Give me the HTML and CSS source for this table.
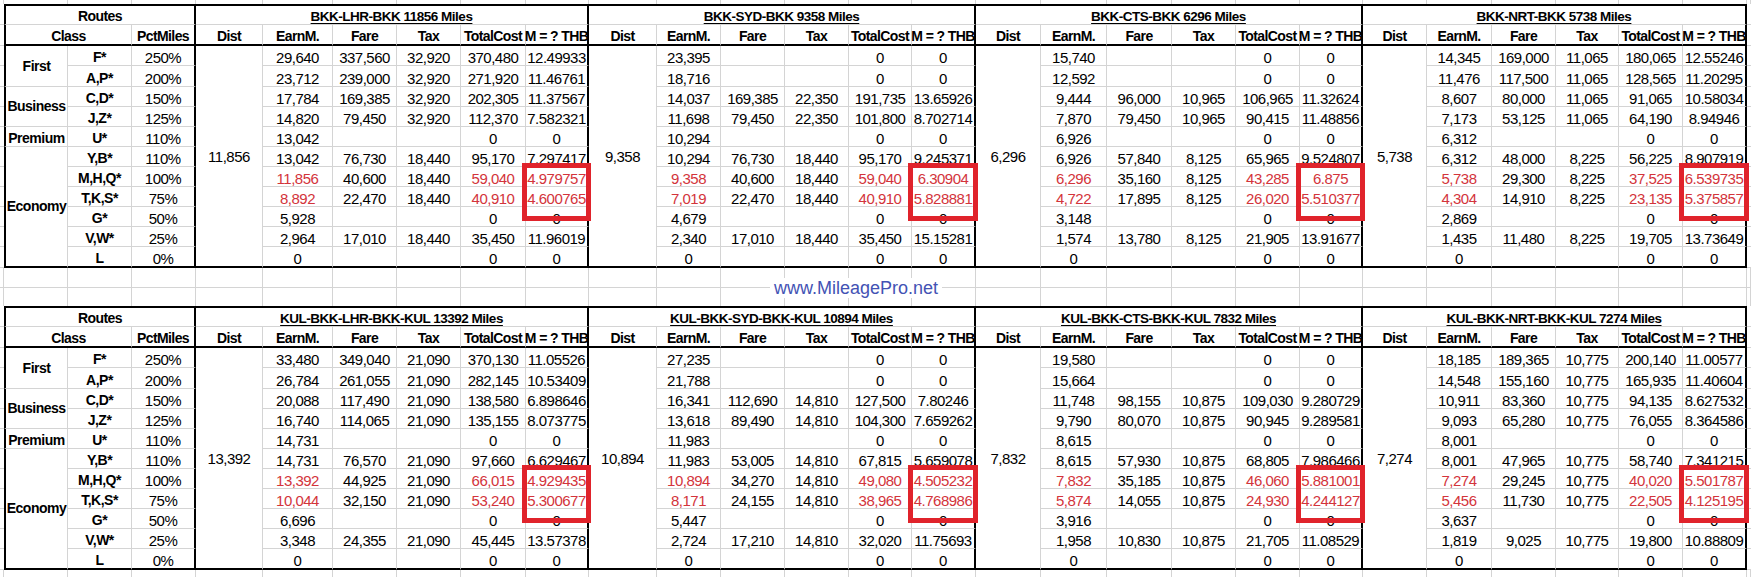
FILE: index.html
```html
<!DOCTYPE html>
<html>
<head>
<meta charset="utf-8">
<title>MileagePro</title>
<link rel="stylesheet" href="styles.css">
</head>
<body>
<div class="sheet">

<div class="cols filler top">
<div></div><div></div><div></div><div></div><div></div><div></div><div></div><div></div><div></div><div></div><div></div><div></div><div></div><div></div><div></div><div></div><div></div><div></div><div></div><div></div><div></div><div></div><div></div><div></div><div></div><div></div><div></div><div></div><div></div>
</div>

<div class="cols tbl">
<div class="tr h1"><div class="g"></div><div class="a r s3">Routes</div><div class="r s6 ttl">BKK-LHR-BKK 11856 Miles</div><div class="r s6 ttl">BKK-SYD-BKK 9358 Miles</div><div class="r s6 ttl">BKK-CTS-BKK 6296 Miles</div><div class="r s6 ttl">BKK-NRT-BKK 5738 Miles</div><div class="ge"></div></div>
<div class="tr h2"><div class="g"></div><div class="a s2">Class</div><div class="r">PctMiles</div><div>Dist</div><div>EarnM.</div><div>Fare</div><div>Tax</div><div>TotalCost</div><div class="r">M = ? THB</div><div>Dist</div><div>EarnM.</div><div>Fare</div><div>Tax</div><div>TotalCost</div><div class="r">M = ? THB</div><div>Dist</div><div>EarnM.</div><div>Fare</div><div>Tax</div><div>TotalCost</div><div class="r">M = ? THB</div><div>Dist</div><div>EarnM.</div><div>Fare</div><div>Tax</div><div>TotalCost</div><div class="r">M = ? THB</div><div class="ge"></div></div>
<div class="tr"><div class="g"></div><div class="a lb v2">First</div><div class="lb">F*</div><div class="r">250%</div><div class="dist">11,856</div><div>29,640</div><div>337,560</div><div>32,920</div><div>370,480</div><div class="r">12.49933</div><div class="dist">9,358</div><div>23,395</div><div></div><div></div><div>0</div><div class="r">0</div><div class="dist">6,296</div><div>15,740</div><div></div><div></div><div>0</div><div class="r">0</div><div class="dist">5,738</div><div>14,345</div><div>169,000</div><div>11,065</div><div>180,065</div><div class="r">12.55246</div><div class="ge"></div></div>
<div class="tr"><div class="g"></div><div class="lb">A,P*</div><div class="r">200%</div><div>23,712</div><div>239,000</div><div>32,920</div><div>271,920</div><div class="r">11.46761</div><div>18,716</div><div></div><div></div><div>0</div><div class="r">0</div><div>12,592</div><div></div><div></div><div>0</div><div class="r">0</div><div>11,476</div><div>117,500</div><div>11,065</div><div>128,565</div><div class="r">11.20295</div><div class="ge"></div></div>
<div class="tr"><div class="g"></div><div class="a lb v2">Business</div><div class="lb">C,D*</div><div class="r">150%</div><div>17,784</div><div>169,385</div><div>32,920</div><div>202,305</div><div class="r">11.37567</div><div>14,037</div><div>169,385</div><div>22,350</div><div>191,735</div><div class="r">13.65926</div><div>9,444</div><div>96,000</div><div>10,965</div><div>106,965</div><div class="r">11.32624</div><div>8,607</div><div>80,000</div><div>11,065</div><div>91,065</div><div class="r">10.58034</div><div class="ge"></div></div>
<div class="tr"><div class="g"></div><div class="lb">J,Z*</div><div class="r">125%</div><div>14,820</div><div>79,450</div><div>32,920</div><div>112,370</div><div class="r">7.582321</div><div>11,698</div><div>79,450</div><div>22,350</div><div>101,800</div><div class="r">8.702714</div><div>7,870</div><div>79,450</div><div>10,965</div><div>90,415</div><div class="r">11.48856</div><div>7,173</div><div>53,125</div><div>11,065</div><div>64,190</div><div class="r">8.94946</div><div class="ge"></div></div>
<div class="tr"><div class="g"></div><div class="a lb">Premium</div><div class="lb">U*</div><div class="r">110%</div><div>13,042</div><div></div><div></div><div>0</div><div class="r">0</div><div>10,294</div><div></div><div></div><div>0</div><div class="r">0</div><div>6,926</div><div></div><div></div><div>0</div><div class="r">0</div><div>6,312</div><div></div><div></div><div>0</div><div class="r">0</div><div class="ge"></div></div>
<div class="tr"><div class="g"></div><div class="a lb eco">Economy</div><div class="lb">Y,B*</div><div class="r">110%</div><div>13,042</div><div>76,730</div><div>18,440</div><div>95,170</div><div class="r">7.297417</div><div>10,294</div><div>76,730</div><div>18,440</div><div>95,170</div><div class="r">9.245371</div><div>6,926</div><div>57,840</div><div>8,125</div><div>65,965</div><div class="r">9.524807</div><div>6,312</div><div>48,000</div><div>8,225</div><div>56,225</div><div class="r">8.907919</div><div class="ge"></div></div>
<div class="tr"><div class="g"></div><div class="lb">M,H,Q*</div><div class="r">100%</div><div class="red">11,856</div><div>40,600</div><div>18,440</div><div class="red">59,040</div><div class="red r hl">4.979757</div><div class="red">9,358</div><div>40,600</div><div>18,440</div><div class="red">59,040</div><div class="red r hl">6.30904</div><div class="red">6,296</div><div>35,160</div><div>8,125</div><div class="red">43,285</div><div class="red r hl">6.875</div><div class="red">5,738</div><div>29,300</div><div>8,225</div><div class="red">37,525</div><div class="red r hl">6.539735</div><div class="ge"></div></div>
<div class="tr"><div class="g"></div><div class="lb">T,K,S*</div><div class="r">75%</div><div class="red">8,892</div><div>22,470</div><div>18,440</div><div class="red">40,910</div><div class="red r">4.600765</div><div class="red">7,019</div><div>22,470</div><div>18,440</div><div class="red">40,910</div><div class="red r">5.828881</div><div class="red">4,722</div><div>17,895</div><div>8,125</div><div class="red">26,020</div><div class="red r">5.510377</div><div class="red">4,304</div><div>14,910</div><div>8,225</div><div class="red">23,135</div><div class="red r">5.375857</div><div class="ge"></div></div>
<div class="tr"><div class="g"></div><div class="lb">G*</div><div class="r">50%</div><div>5,928</div><div></div><div></div><div>0</div><div class="r">0</div><div>4,679</div><div></div><div></div><div>0</div><div class="r">0</div><div>3,148</div><div></div><div></div><div>0</div><div class="r">0</div><div>2,869</div><div></div><div></div><div>0</div><div class="r">0</div><div class="ge"></div></div>
<div class="tr"><div class="g"></div><div class="lb">V,W*</div><div class="r">25%</div><div>2,964</div><div>17,010</div><div>18,440</div><div>35,450</div><div class="r">11.96019</div><div>2,340</div><div>17,010</div><div>18,440</div><div>35,450</div><div class="r">15.15281</div><div>1,574</div><div>13,780</div><div>8,125</div><div>21,905</div><div class="r">13.91677</div><div>1,435</div><div>11,480</div><div>8,225</div><div>19,705</div><div class="r">13.73649</div><div class="ge"></div></div>
<div class="tr last"><div class="g"></div><div class="lb">L</div><div class="r">0%</div><div>0</div><div></div><div></div><div>0</div><div class="r">0</div><div>0</div><div></div><div></div><div>0</div><div class="r">0</div><div>0</div><div></div><div></div><div>0</div><div class="r">0</div><div>0</div><div></div><div></div><div>0</div><div class="r">0</div><div class="ge"></div></div>
</div>

<div class="gap">
<div class="cols filler mid">
<div></div><div></div><div></div><div></div><div></div><div></div><div></div><div></div><div></div><div></div><div></div><div></div><div></div><div></div><div></div><div></div><div></div><div></div><div></div><div></div><div></div><div></div><div></div><div></div><div></div><div></div><div></div><div></div><div></div>
<div></div><div></div><div></div><div></div><div></div><div></div><div></div><div></div><div></div><div></div><div></div><div></div><div></div><div></div><div></div><div></div><div></div><div></div><div></div><div></div><div></div><div></div><div></div><div></div><div></div><div></div><div></div><div></div><div></div>
</div>
<div class="brand">www.MileagePro.net</div>
</div>

<div class="cols tbl">
<div class="tr h1"><div class="g"></div><div class="a r s3">Routes</div><div class="r s6 ttl">KUL-BKK-LHR-BKK-KUL 13392 Miles</div><div class="r s6 ttl">KUL-BKK-SYD-BKK-KUL 10894 Miles</div><div class="r s6 ttl">KUL-BKK-CTS-BKK-KUL 7832 Miles</div><div class="r s6 ttl">KUL-BKK-NRT-BKK-KUL 7274 Miles</div><div class="ge"></div></div>
<div class="tr h2"><div class="g"></div><div class="a s2">Class</div><div class="r">PctMiles</div><div>Dist</div><div>EarnM.</div><div>Fare</div><div>Tax</div><div>TotalCost</div><div class="r">M = ? THB</div><div>Dist</div><div>EarnM.</div><div>Fare</div><div>Tax</div><div>TotalCost</div><div class="r">M = ? THB</div><div>Dist</div><div>EarnM.</div><div>Fare</div><div>Tax</div><div>TotalCost</div><div class="r">M = ? THB</div><div>Dist</div><div>EarnM.</div><div>Fare</div><div>Tax</div><div>TotalCost</div><div class="r">M = ? THB</div><div class="ge"></div></div>
<div class="tr"><div class="g"></div><div class="a lb v2">First</div><div class="lb">F*</div><div class="r">250%</div><div class="dist">13,392</div><div>33,480</div><div>349,040</div><div>21,090</div><div>370,130</div><div class="r">11.05526</div><div class="dist">10,894</div><div>27,235</div><div></div><div></div><div>0</div><div class="r">0</div><div class="dist">7,832</div><div>19,580</div><div></div><div></div><div>0</div><div class="r">0</div><div class="dist">7,274</div><div>18,185</div><div>189,365</div><div>10,775</div><div>200,140</div><div class="r">11.00577</div><div class="ge"></div></div>
<div class="tr"><div class="g"></div><div class="lb">A,P*</div><div class="r">200%</div><div>26,784</div><div>261,055</div><div>21,090</div><div>282,145</div><div class="r">10.53409</div><div>21,788</div><div></div><div></div><div>0</div><div class="r">0</div><div>15,664</div><div></div><div></div><div>0</div><div class="r">0</div><div>14,548</div><div>155,160</div><div>10,775</div><div>165,935</div><div class="r">11.40604</div><div class="ge"></div></div>
<div class="tr"><div class="g"></div><div class="a lb v2">Business</div><div class="lb">C,D*</div><div class="r">150%</div><div>20,088</div><div>117,490</div><div>21,090</div><div>138,580</div><div class="r">6.898646</div><div>16,341</div><div>112,690</div><div>14,810</div><div>127,500</div><div class="r">7.80246</div><div>11,748</div><div>98,155</div><div>10,875</div><div>109,030</div><div class="r">9.280729</div><div>10,911</div><div>83,360</div><div>10,775</div><div>94,135</div><div class="r">8.627532</div><div class="ge"></div></div>
<div class="tr"><div class="g"></div><div class="lb">J,Z*</div><div class="r">125%</div><div>16,740</div><div>114,065</div><div>21,090</div><div>135,155</div><div class="r">8.073775</div><div>13,618</div><div>89,490</div><div>14,810</div><div>104,300</div><div class="r">7.659262</div><div>9,790</div><div>80,070</div><div>10,875</div><div>90,945</div><div class="r">9.289581</div><div>9,093</div><div>65,280</div><div>10,775</div><div>76,055</div><div class="r">8.364586</div><div class="ge"></div></div>
<div class="tr"><div class="g"></div><div class="a lb">Premium</div><div class="lb">U*</div><div class="r">110%</div><div>14,731</div><div></div><div></div><div>0</div><div class="r">0</div><div>11,983</div><div></div><div></div><div>0</div><div class="r">0</div><div>8,615</div><div></div><div></div><div>0</div><div class="r">0</div><div>8,001</div><div></div><div></div><div>0</div><div class="r">0</div><div class="ge"></div></div>
<div class="tr"><div class="g"></div><div class="a lb eco">Economy</div><div class="lb">Y,B*</div><div class="r">110%</div><div>14,731</div><div>76,570</div><div>21,090</div><div>97,660</div><div class="r">6.629467</div><div>11,983</div><div>53,005</div><div>14,810</div><div>67,815</div><div class="r">5.659078</div><div>8,615</div><div>57,930</div><div>10,875</div><div>68,805</div><div class="r">7.986466</div><div>8,001</div><div>47,965</div><div>10,775</div><div>58,740</div><div class="r">7.341215</div><div class="ge"></div></div>
<div class="tr"><div class="g"></div><div class="lb">M,H,Q*</div><div class="r">100%</div><div class="red">13,392</div><div>44,925</div><div>21,090</div><div class="red">66,015</div><div class="red r hl">4.929435</div><div class="red">10,894</div><div>34,270</div><div>14,810</div><div class="red">49,080</div><div class="red r hl">4.505232</div><div class="red">7,832</div><div>35,185</div><div>10,875</div><div class="red">46,060</div><div class="red r hl">5.881001</div><div class="red">7,274</div><div>29,245</div><div>10,775</div><div class="red">40,020</div><div class="red r hl">5.501787</div><div class="ge"></div></div>
<div class="tr"><div class="g"></div><div class="lb">T,K,S*</div><div class="r">75%</div><div class="red">10,044</div><div>32,150</div><div>21,090</div><div class="red">53,240</div><div class="red r">5.300677</div><div class="red">8,171</div><div>24,155</div><div>14,810</div><div class="red">38,965</div><div class="red r">4.768986</div><div class="red">5,874</div><div>14,055</div><div>10,875</div><div class="red">24,930</div><div class="red r">4.244127</div><div class="red">5,456</div><div>11,730</div><div>10,775</div><div class="red">22,505</div><div class="red r">4.125195</div><div class="ge"></div></div>
<div class="tr"><div class="g"></div><div class="lb">G*</div><div class="r">50%</div><div>6,696</div><div></div><div></div><div>0</div><div class="r">0</div><div>5,447</div><div></div><div></div><div>0</div><div class="r">0</div><div>3,916</div><div></div><div></div><div>0</div><div class="r">0</div><div>3,637</div><div></div><div></div><div>0</div><div class="r">0</div><div class="ge"></div></div>
<div class="tr"><div class="g"></div><div class="lb">V,W*</div><div class="r">25%</div><div>3,348</div><div>24,355</div><div>21,090</div><div>45,445</div><div class="r">13.57378</div><div>2,724</div><div>17,210</div><div>14,810</div><div>32,020</div><div class="r">11.75693</div><div>1,958</div><div>10,830</div><div>10,875</div><div>21,705</div><div class="r">11.08529</div><div>1,819</div><div>9,025</div><div>10,775</div><div>19,800</div><div class="r">10.88809</div><div class="ge"></div></div>
<div class="tr last"><div class="g"></div><div class="lb">L</div><div class="r">0%</div><div>0</div><div></div><div></div><div>0</div><div class="r">0</div><div>0</div><div></div><div></div><div>0</div><div class="r">0</div><div>0</div><div></div><div></div><div>0</div><div class="r">0</div><div>0</div><div></div><div></div><div>0</div><div class="r">0</div><div class="ge"></div></div>
</div>

<div class="cols filler bottom">
<div></div><div></div><div></div><div></div><div></div><div></div><div></div><div></div><div></div><div></div><div></div><div></div><div></div><div></div><div></div><div></div><div></div><div></div><div></div><div></div><div></div><div></div><div></div><div></div><div></div><div></div><div></div><div></div><div></div>
</div>

</div>
</body>
</html>
```
FILE: styles.css
```css
* { box-sizing: border-box; }
html, body { margin: 0; padding: 0; background: #fff; }
body {
  font-family: "Liberation Sans", Arial, sans-serif;
  font-size: 15px;
  letter-spacing: -0.5px;
  color: #000;
  overflow: hidden;
}
.sheet { width: 1751px; display: flex; flex-direction: column; }

.cols {
  display: grid;
  grid-template-columns: 4px 64px 64px 64px 67px 70px 64px 64px 65px 63px 68px 64px 64px 64px 63px 64px 65px 66px 65px 64px 64px 63px 64px 65px 64px 63px 64px 64px 4px;
}

/* empty grid rows outside the tables */
.filler > div { border-right: 1px solid #d4d4d4; }
.top { grid-template-rows: 4px; }
.bottom { grid-template-rows: 7px; }
.mid { grid-template-rows: 20px 18px; }
.mid > div:nth-child(-n+29) { border-bottom: 1px solid #d4d4d4; }

/* data tables */
.tbl { grid-template-rows: 21px 21px 20px 21px 20px 20px 20px 20px 20px 20px 20px 20px 21px; }
.tr { display: contents; }
.tr > div {
  min-width: 0;
  display: flex;
  align-items: flex-end;
  justify-content: center;
  line-height: 15px;
  white-space: nowrap;
  border-right: 1px solid #d4d4d4;
  border-bottom: 1px solid #d4d4d4;
}
.tr > div.g { border-right: none; }
.tr > div.ge { border-right: none; }

.tr > .a { border-left: 2px solid #000; }
.tr > .r { border-right: 2px solid #000; }
.h1 > div:not(.g):not(.ge) { border-top: 2px solid #000; }
.h2 > div:not(.g):not(.ge) { border-bottom: 2px solid #000; }
.last > div:not(.g):not(.ge),
.tr > .dist,
.tr > .eco { border-bottom: 2px solid #000; }

.s2 { grid-column: span 2; }
.s3 { grid-column: span 3; }
.s6 { grid-column: span 6; }
.tr > .v2 { grid-row: span 2; align-items: center; }
.tr > .eco { grid-row: span 6; align-items: center; }
.tr > .dist { grid-row: span 11; align-items: center; }

.h1 > div, .h2 > div {
  font-weight: 700;
  font-size: 14px;
  letter-spacing: -0.6px;
}
.h1 > .ttl {
  font-size: 13.5px;
  letter-spacing: -0.5px;
  text-decoration: underline;
  text-underline-offset: 2px;
}
.tr > .lb {
  font-weight: 700;
  font-size: 14px;
  letter-spacing: -0.5px;
}
.tr > .red { color: #d3343b; }

.tr > .hl { position: relative; }
.tr > .hl::after {
  content: "";
  position: absolute;
  left: -4px;
  right: -4px;
  top: -4px;
  height: 48px;
  border: 5px solid #e0232b;
}

.gap { position: relative; }
.brand {
  position: absolute;
  left: 770px;
  top: 10px;
  width: 172px;
  height: 20px;
  background: #fff;
  font-family: "Liberation Sans", Arial, sans-serif;
  font-size: 18px;
  letter-spacing: 0;
  line-height: 20px;
  color: #4352b4;
  text-align: center;
}
```
